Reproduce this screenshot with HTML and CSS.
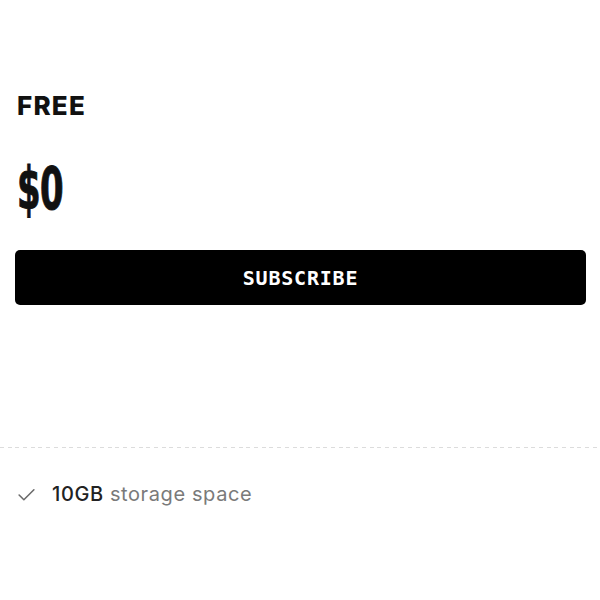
FILE: index.html
```html
<!DOCTYPE html>
<html lang="en">
<head>
    <meta charset="UTF-8">
    <meta name="viewport" content="width=device-width, initial-scale=1.0">
    <title>Pricing</title>
    <link rel="stylesheet" href="styles.css">
</head>
<body>
    <div class="plan">
        <div class="plan-top">
            <h3 class="plan-name">FREE</h3>
            <div class="plan-price"><span>$0</span></div>
            <button class="subscribe-btn">SUBSCRIBE</button>
        </div>

        <ul class="features">
            <li>
                <svg class="check" width="19" height="19" viewBox="0 0 18 18">
                    <path d="M2 9.5 L6.5 14 L16 4.5" fill="none" stroke="#6b6b6b" stroke-width="1.5" stroke-linecap="round" stroke-linejoin="round"/>
                </svg>
                <span><strong>10GB</strong> storage space</span>
            </li>
        </ul>
    </div>
</body>
</html>
```

FILE: styles.css
```css
/* Pricing card */
body {
    margin: 0;
    background-color: #fff;
    font-family: Inter, "Noto Sans", sans-serif;
    color: #111;
}

.plan {
    padding-top: 90px;
}

.plan-top {
    padding: 0 14px 0 15px;
}

.plan-name {
    margin: 0;
    padding-left: 2px;
    font-size: 26px;
    line-height: 32px;
    font-weight: 800;
    letter-spacing: 1.2px;
}

.plan-price {
    margin-top: 38px;
    padding-left: 2px;
    font-family: "DejaVu Sans", sans-serif;
    font-stretch: condensed;
    font-weight: 700;
    font-size: 58px;
    line-height: 58px;
}

.plan-price span {
    display: inline-block;
    transform: scaleX(0.65);
    transform-origin: left center;
    letter-spacing: -1px;
    -webkit-text-stroke: 1px #111;
}

.subscribe-btn {
    display: block;
    width: 100%;
    height: 55px;
    margin-top: 32px;
    background-color: #000;
    color: #fff;
    border: none;
    border-radius: 5px;
    font-family: "DejaVu Sans Mono", "Liberation Mono", monospace;
    font-weight: 700;
    font-size: 20px;
    letter-spacing: 0.04em;
    cursor: pointer;
}

/* Feature list */
.features {
    list-style: none;
    margin: 142px 0 0;
    padding: 34px 0 0 17px;
    background-image: repeating-linear-gradient(to right, #dcdcdc 0 4px, transparent 4px 7.7px);
    background-size: 100% 1px;
    background-repeat: no-repeat;
}

.features li {
    display: flex;
    align-items: center;
    gap: 16px;
    font-size: 20px;
    line-height: 26px;
    letter-spacing: 0.03em;
    color: #7a7a7a;
}

.features strong {
    font-weight: 500;
    color: #222;
}
```
